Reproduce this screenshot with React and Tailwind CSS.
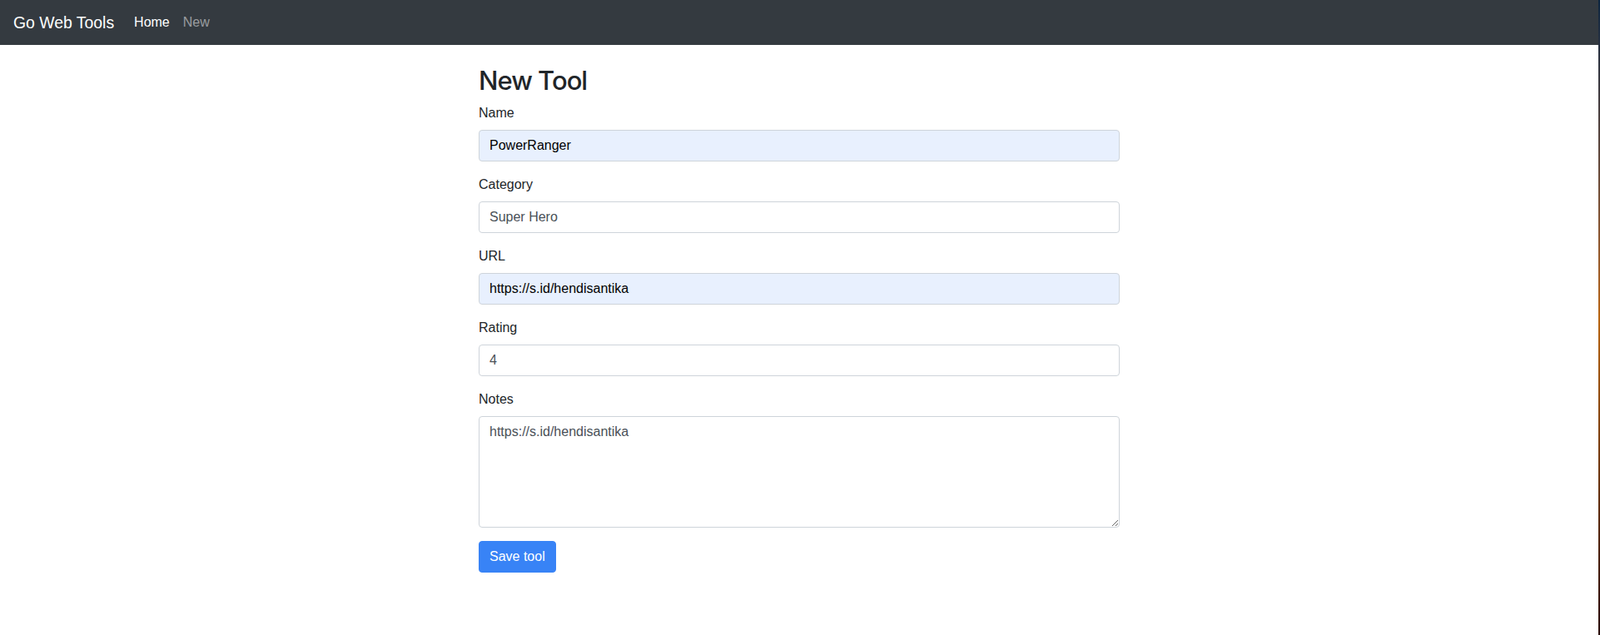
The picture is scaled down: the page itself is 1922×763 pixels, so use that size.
import React from 'react';

const font = { fontFamily: '"Liberation Sans", Arial, sans-serif' };

const fields = [
  { label: 'Name', value: 'PowerRanger', autofill: true },
  { label: 'Category', value: 'Super Hero' },
  { label: 'URL', value: 'https://s.id/hendisantika', autofill: true },
  { label: 'Rating', value: '4' },
];

function Field({ label, value, autofill }) {
  return (
    <div className="mb-4">
      <label className="mb-2 block text-base leading-6 text-[#212529]">{label}</label>
      <input
        readOnly
        value={value}
        className={[
          'block h-[38px] w-full rounded-[4px] border border-[#ced4da] px-3 text-base leading-6 outline-none',
          autofill ? 'bg-[#e8f0fe] text-black' : 'bg-white text-[#495057]',
        ].join(' ')}
      />
    </div>
  );
}

export default function App() {
  return (
    <div className="flex min-h-[763px] bg-white" style={font}>
      <div className="flex-1">
        <nav className="flex h-[54px] items-center bg-[#343a40] px-4">
          <span className="mr-4 text-[19.4px] leading-[30px] text-white">Go Web Tools</span>
          <div className="flex items-center">
            <span className="px-2 text-base leading-6 text-white">Home</span>
            <span className="px-2 text-base leading-6 text-white/50">New</span>
          </div>
        </nav>

        <div className="mx-auto max-w-[800px] px-[15px]">
          <h2
            className="mb-2 mt-6 h-[38px] text-[31px] font-medium leading-[38px] tracking-[-1px] text-[#212529]"
            style={{ fontFamily: 'Inter, "Liberation Sans", sans-serif' }}
          >
            New Tool
          </h2>
          <form>
            {fields.map((f) => (
              <Field key={f.label} {...f} />
            ))}
            <div className="mb-4">
              <label className="mb-2 block text-base leading-6 text-[#212529]">Notes</label>
              <textarea
                readOnly
                rows={5}
                value="https://s.id/hendisantika"
                className="block h-[134px] w-full rounded-[4px] border border-[#ced4da] bg-white px-3 py-[6px] text-base leading-6 text-[#495057] outline-none"
                style={{ resize: 'vertical' }}
              />
            </div>
            <button
              type="button"
              className="h-[38px] rounded-[4px] border border-[#3883f6] bg-[#3883f6] px-3 text-base leading-6 text-white"
            >
              Save tool
            </button>
          </form>
        </div>
      </div>
      <div className="w-[2px] bg-gradient-to-b from-[#0b2540] via-[#b86510] to-[#2a0c06]" />
    </div>
  );
}
